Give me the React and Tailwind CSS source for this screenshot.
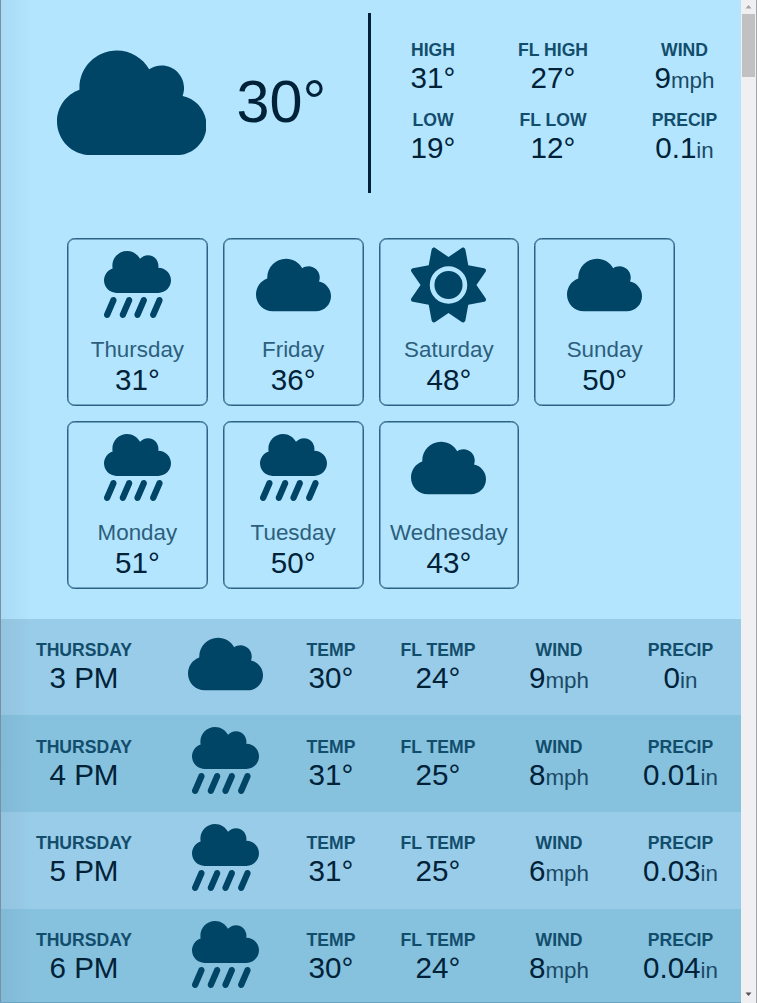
import { FaCloud, FaCloudShowersHeavy, FaSun } from "react-icons/fa6";

function WeatherIcon({ kind }) {
  return (
    <div className="flex h-[76px] w-[75px] items-center justify-center text-[#004466]">
      {kind === "cloud" && <FaCloud className="h-[60px] w-[75px]" />}
      {kind === "rain" && <FaCloudShowersHeavy className="size-[67px]" />}
      {kind === "sun" && <FaSun className="size-[76px]" />}
    </div>
  );
}

function Stat({ label, value, unit }) {
  return (
    <div className="flex flex-col items-center gap-px whitespace-nowrap">
      <div className="text-[17.6px] leading-5 font-bold text-[#124d6c] uppercase">{label}</div>
      <div className="text-[29.6px] leading-[33px] text-[#002238]">
        {value}
        {unit && <span className="text-[22.4px] leading-none text-[#1b4a66]">{unit}</span>}
      </div>
    </div>
  );
}

const today = [
  ["High", "31°"],
  ["FL High", "27°"],
  ["Wind", "9", "mph"],
  ["Low", "19°"],
  ["FL Low", "12°"],
  ["Precip", "0.1", "in"],
];

const days = [
  ["Thursday", "31°", "rain"],
  ["Friday", "36°", "cloud"],
  ["Saturday", "48°", "sun"],
  ["Sunday", "50°", "cloud"],
  ["Monday", "51°", "rain"],
  ["Tuesday", "50°", "rain"],
  ["Wednesday", "43°", "cloud"],
];

const hours = [
  ["3 PM", "cloud", "30°", "24°", "9", "0"],
  ["4 PM", "rain", "31°", "25°", "8", "0.01"],
  ["5 PM", "rain", "31°", "25°", "6", "0.03"],
  ["6 PM", "rain", "30°", "24°", "8", "0.04"],
];

function Header() {
  return (
    <header className="flex h-[180px]">
      <div className="flex w-[367.5px] items-center pl-[56.5px]">
        <FaCloud className="h-[119.6px] w-[149.5px] text-[#004466]" />
        <div className="ml-[30.5px] pb-[2px] text-[59.3px] leading-none text-[#002238]">30°</div>
      </div>
      <div className="w-[3px] bg-[#002137]" />
      <div className="ml-[21px] grid grid-cols-[83px_157px_106px] content-start gap-y-[15.75px] pt-[27.5px]">
        {today.map(([label, value, unit]) => (
          <Stat key={label} label={label} value={value} unit={unit} />
        ))}
      </div>
    </header>
  );
}

function DayCard({ day, temp, icon }) {
  return (
    <div className="flex h-[168px] flex-col items-center rounded-[7.5px] border border-[#2c6283] pt-[8px] shadow-[inset_0_0_0_0.5px_#2c6283]">
      <WeatherIcon kind={icon} />
      <div className="mt-[14px] text-[22.4px] leading-[25px] text-[#2d5f7c]">{day}</div>
      <div className="mt-px text-[29.6px] leading-[33px] text-[#002238]">{temp}</div>
    </div>
  );
}

function Scrollbar() {
  return (
    <div className="flex w-4 shrink-0 flex-col items-center border-r border-[#a4a6a9] bg-[#f0f0f2]">
      <svg className="h-[14px] w-[7px] text-[#a3a3a3]" viewBox="0 0 7 14">
        <path d="M0.5 8.5L3.5 5L6.5 8.5Z" fill="currentColor" />
      </svg>
      <div className="h-[63px] w-[13px] bg-[#c1c1c1]" />
      <svg className="mt-auto mb-[2px] h-[14px] w-[7px] text-[#505050]" viewBox="0 0 7 14">
        <path d="M0.5 5.5L3.5 9L6.5 5.5Z" fill="currentColor" />
      </svg>
    </div>
  );
}

export default function App() {
  return (
    <div className="flex h-[1003px] w-[757px] overflow-hidden bg-[#b3e5ff] font-['Liberation_Sans',Arial,sans-serif]">
      <main className="relative w-[741px] shrink-0 overflow-hidden pt-[12.5px]">
        <Header />
        <section className="mt-[45px] ml-[67px] grid w-[608px] grid-cols-4 gap-[15px]">
          {days.map(([day, temp, icon]) => (
            <DayCard key={day} day={day} temp={temp} icon={icon} />
          ))}
        </section>
        <section className="mt-[30px]">
          {hours.map(([time, icon, temp, feels, wind, precip]) => (
            <div
              key={time}
              className="grid h-[96.75px] grid-cols-[168px_115px_96px_118px_124px_119px] pt-[21.25px] odd:bg-[#99cce8] even:bg-[#86c1de]"
            >
              <Stat label="Thursday" value={time} />
              <div className="-mt-[14px] flex justify-center">
                <WeatherIcon kind={icon} />
              </div>
              <Stat label="Temp" value={temp} />
              <Stat label="FL Temp" value={feels} />
              <Stat label="Wind" value={wind} unit="mph" />
              <Stat label="Precip" value={precip} unit="in" />
            </div>
          ))}
        </section>
        <div className="pointer-events-none absolute inset-y-0 left-0 w-8 border-l border-[#7890a0] bg-linear-to-r from-[#50709018] to-transparent" />
        <div className="absolute inset-x-0 bottom-0 h-px bg-[#6ba3c0]" />
      </main>
      <Scrollbar />
    </div>
  );
}
